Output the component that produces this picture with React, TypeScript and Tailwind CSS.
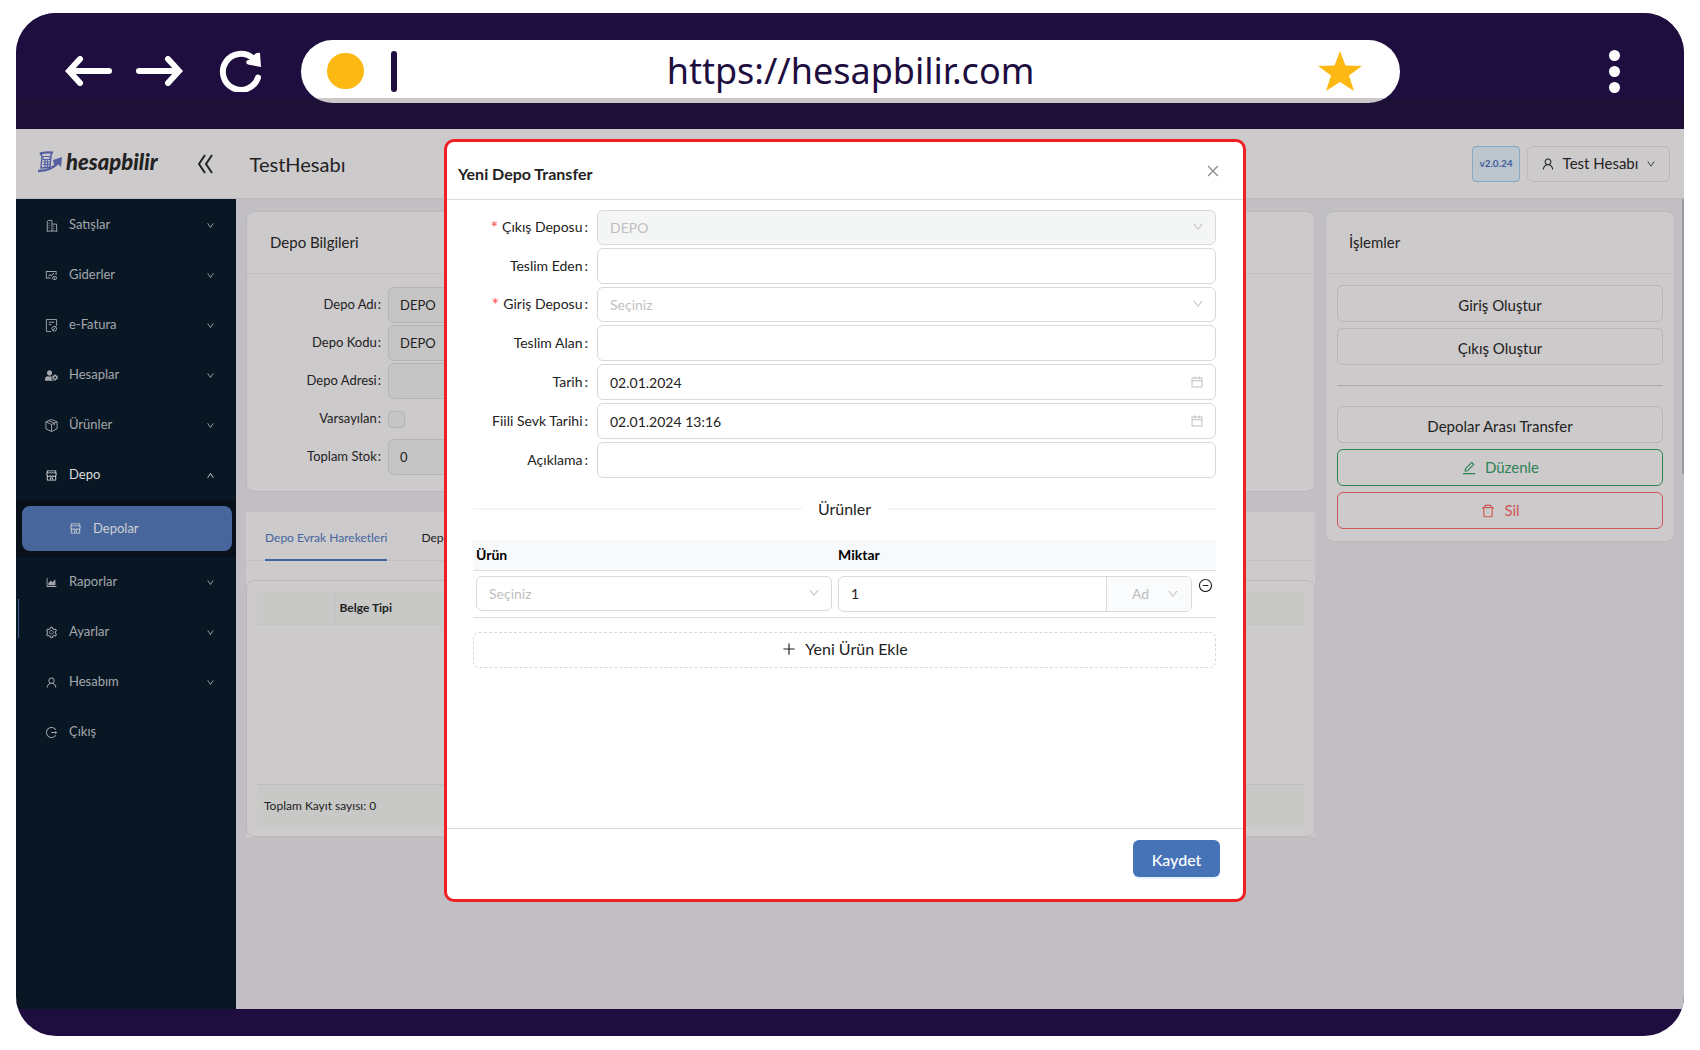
import type { ComponentType, ReactNode } from "react";
import {
  AiOutlineAreaChart,
  AiOutlineCalendar,
  AiOutlineClose,
  AiOutlineDelete,
  AiOutlineDown,
  AiOutlineEdit,
  AiOutlineFundView,
  AiOutlineLogout,
  AiOutlineMinusCircle,
  AiOutlinePlus,
  AiOutlineSetting,
  AiOutlineShop,
  AiOutlineUp,
  AiOutlineUser,
} from "react-icons/ai";
import { FaUserCog } from "react-icons/fa";

interface IconProps {
  className?: string;
}

interface MenuEntry {
  label: string;
  icon: ComponentType<IconProps>;
  expandable?: boolean;
}

function BuildingsIcon({ className }: IconProps) {
  return (
    <svg viewBox="0 0 14 14" fill="none" stroke="currentColor" className={className}>
      <path d="M2.500 13V2.500L4 1.500h3.500V13M7.500 5.500h5V13M1.500 13h12" />
      <path d="M4 4.500h2M4 7h2M4 9.500h2M9 8h2M9 10.500h2" strokeDasharray="1 1" />
    </svg>
  );
}

function InvoiceIcon({ className }: IconProps) {
  return (
    <svg viewBox="0 0 14 14" fill="none" stroke="currentColor" className={className}>
      <path d="M6.500 13.500h-5V.500h11v7M4 3.500h6M4 6h3" />
      <circle cx="10" cy="10.500" r="2.500" />
      <path d="M8.500 12l3-3" />
    </svg>
  );
}

function BoxIcon({ className }: IconProps) {
  return (
    <svg viewBox="0 0 14 14" fill="none" stroke="currentColor" strokeLinejoin="round" className={className}>
      <path d="M7 .500l6 2.500v7.500l-6 3-6-3V3zM1 3l6 3 6-3M7 6v7.500M4 1.800l6 2.700v2.500" />
    </svg>
  );
}

const MENU_TOP: MenuEntry[] = [
  { label: "Satışlar", icon: BuildingsIcon, expandable: true },
  { label: "Giderler", icon: AiOutlineFundView, expandable: true },
  { label: "e-Fatura", icon: InvoiceIcon, expandable: true },
  { label: "Hesaplar", icon: FaUserCog, expandable: true },
  { label: "Ürünler", icon: BoxIcon, expandable: true },
];

const MENU_BOTTOM: MenuEntry[] = [
  { label: "Raporlar", icon: AiOutlineAreaChart, expandable: true },
  { label: "Ayarlar", icon: AiOutlineSetting, expandable: true },
  { label: "Hesabım", icon: AiOutlineUser, expandable: true },
  { label: "Çıkış", icon: AiOutlineLogout },
];

export default function App() {
  return (
    <div className="flex min-h-screen flex-col bg-white pt-[13px] pr-4 pb-[14px] pl-4 font-['Lato','Noto_Sans',sans-serif] text-[#222]">
      <div className="flex flex-1 flex-col overflow-hidden rounded-[40px] bg-[#1e0e3f]">
        <BrowserBar />
        <div className="relative flex flex-1 flex-col bg-[#c1bfc4]">
          <TopBar />
          <div className="flex flex-1">
            <Sidebar />
            <main className="flex min-w-0 flex-1 items-start gap-[10px] pt-3 pr-[9px] pl-[10px]">
              <div className="flex min-w-0 flex-1 flex-col gap-5">
                <WarehouseCard />
                <MovementsCard />
              </div>
              <ActionsCard />
            </main>
          </div>
          <span className="absolute top-[70px] right-0 h-[275px] w-[2px] bg-[#9d9b9f]" />
          <div className="absolute inset-0 flex items-start justify-center pt-[10px] pr-[10px]">
            <TransferDialog />
          </div>
        </div>
        <div className="h-[27px]" />
      </div>
    </div>
  );
}

function BrowserBar() {
  return (
    <div className="flex h-[116px] items-center bg-[linear-gradient(#1e0e3f_85px,#1d1036_85px)]">
      <div className="flex w-[285px] items-center pl-[49px]">
        <button aria-label="Geri" className="mr-6">
          <svg width="47" height="30" viewBox="0 0 47 30" fill="none" stroke="#fff" strokeWidth="6" strokeLinecap="round">
            <path d="M44 15H6M15 3L4 15l11 12" />
          </svg>
        </button>
        <button aria-label="İleri" className="mr-9">
          <svg width="47" height="30" viewBox="0 0 47 30" fill="none" stroke="#fff" strokeWidth="6" strokeLinecap="round">
            <path d="M3 15h38M32 3l11 12-11 12" />
          </svg>
        </button>
        <button aria-label="Yenile">
          <svg width="42" height="42" viewBox="0 0 42 42" fill="none">
            <path d="M39 27.500A18 18 0 1 1 34 8.500" stroke="#fff" strokeWidth="6" strokeLinecap="round" />
            <path d="M41 3L42 17L29 14.500Q26 13 28 10.500L32 9L36 4Q39 2 41 3Z" fill="#fff" />
          </svg>
        </button>
      </div>
      <div className="flex h-[63px] flex-1 items-center rounded-full bg-[linear-gradient(#fff_58px,#cac8c9_58px)]">
        <div className="flex w-[120px] items-center gap-[27px] pl-[26px]">
          <span className="h-[36px] w-[37px] rounded-full bg-[#fdb913]" />
          <span className="h-[41px] w-[6px] rounded-full bg-[#1e0e3f]" />
        </div>
        <input
          aria-label="Adres"
          defaultValue="https://hesapbilir.com"
          className="min-w-0 flex-1 bg-transparent text-center font-['Noto_Sans',sans-serif] text-[36px] leading-[48px] text-[#1e0e3f] outline-none"
        />
        <div className="flex w-[120px] justify-end pr-[38px]">
          <svg width="44" height="40" viewBox="0 0 44 40" fill="#fdb913">
            <path d="M22 0L27.500 14.500L44 15L31 24.500L36 40L22 31L8 40L13 24.500L0 15L16.500 14.500Z" />
          </svg>
        </div>
      </div>
      <div className="flex w-[284px] justify-end pr-[64px]">
        <button aria-label="Menü" className="flex flex-col gap-[5px]">
          <span className="size-[11px] rounded-full bg-white" />
          <span className="size-[11px] rounded-full bg-white" />
          <span className="size-[11px] rounded-full bg-white" />
        </button>
      </div>
    </div>
  );
}

function TopBar() {
  return (
    <header className="flex h-[70px] items-center border-b border-[#bdbbbf] bg-[#cdcacb] pr-[14px] pl-[22px]">
      <Logo />
      <button aria-label="Menüyü daralt" className="ml-10">
        <svg width="16" height="20" viewBox="0 0 16 20" fill="none" stroke="#222" strokeWidth="2">
          <path d="M7 1L1 10l6 9M14 1L8 10l6 9" />
        </svg>
      </button>
      <h1 className="ml-9 text-[20px]">TestHesabı</h1>
      <div className="ml-auto flex gap-[7px]">
        <span className="flex h-[36px] w-12 items-center justify-center rounded border border-[#86aac4] bg-[#bcc5cb] text-[10px] font-bold text-[#3d5c9c]">
          v2.0.24
        </span>
        <button className="flex h-[36px] w-[143px] items-center justify-center gap-2 rounded-md border border-[#b9b7b8] text-[15px]">
          <AiOutlineUser className="size-[14px]" />
          Test Hesabı
          <AiOutlineDown className="size-[10px]" />
        </button>
      </div>
    </header>
  );
}

function Logo() {
  return (
    <a href="#" className="flex items-center gap-1 pb-1">
      <svg width="24" height="22" viewBox="0 0 24 22" fill="none" stroke="#5460a3">
        <path d="M2 2.500Q8 1 14 1.500L13 4" strokeWidth="2" />
        <path d="M2 2l2 3-1 12 9-1 1-12" strokeWidth="1.500" />
        <path d="M5 5.500h7v3H5z" strokeWidth="1" />
        <path d="M5 11h7M5 13.500h7M7 9v7M9.500 9v7" strokeWidth="1.200" />
        <path d="M0 20q13 0 21-9" strokeWidth="2.500" />
        <path d="M15 9l9-3-1 10-3-3-4 1z" fill="#5460a3" stroke="none" />
      </svg>
      <span className="font-['Lato',sans-serif] text-[22px] leading-7 font-black italic">hesapbilir</span>
    </a>
  );
}

function MenuItem({ label, icon: Icon, expandable }: MenuEntry) {
  return (
    <li>
      <button className="flex h-[50px] w-full items-center pr-[21px] pl-[29px] text-left">
        <Icon className="size-[13px]" />
        <span className="ml-[11px] flex-1">{label}</span>
        {expandable && <AiOutlineDown className="size-[9px]" />}
      </button>
    </li>
  );
}

function Sidebar() {
  return (
    <nav className="relative w-[220px] shrink-0 bg-[#091725] text-[13px] text-[#a4a8ac]">
      <ul className="pt-px">
        {MENU_TOP.map((item) => (
          <MenuItem key={item.label} {...item} />
        ))}
        <li>
          <button className="flex h-[50px] w-full items-center pr-[21px] pl-[29px] text-left text-[#dcdddd]">
            <AiOutlineShop className="size-[13px]" />
            <span className="ml-[11px] flex-1">Depo</span>
            <AiOutlineUp className="size-[9px]" />
          </button>
          <div className="bg-[#08101a] pt-[6px] pr-1 pb-[6px] pl-[6px]">
            <a href="#" className="flex h-[45px] items-center gap-[11px] rounded-lg bg-[#46669c] pl-[47px] text-[#cfd1d2]">
              <AiOutlineShop className="size-[13px]" />
              Depolar
            </a>
          </div>
        </li>
        {MENU_BOTTOM.map((item) => (
          <MenuItem key={item.label} {...item} />
        ))}
      </ul>
      <span className="absolute top-[400px] left-[2px] h-[39px] w-px bg-[#3c5c94]" />
    </nav>
  );
}

function Card({ title, className = "", children }: { title: string; className?: string; children: ReactNode }) {
  return (
    <section className={`rounded-lg border border-[#bab8ba] bg-[#cdcacb] ${className}`}>
      <h2 className="border-b border-[#c2c0c2] px-[23px] py-5 text-[15px] leading-[21px]">{title}</h2>
      {children}
    </section>
  );
}

function WarehouseCard() {
  const rows = [
    { id: "depo-adi", label: "Depo Adı", value: "DEPO" },
    { id: "depo-kodu", label: "Depo Kodu", value: "DEPO" },
    { id: "depo-adresi", label: "Depo Adresi", value: "" },
    { id: "varsayilan", label: "Varsayılan" },
    { id: "toplam-stok", label: "Toplam Stok", value: "0" },
  ];
  return (
    <Card title="Depo Bilgileri">
      <div className="flex w-1/2 flex-col gap-[2px] pt-[13px] pb-4 text-[13px]">
        {rows.map((row) => (
          <div key={row.id} className="grid h-[36px] grid-cols-[134px_1fr] items-center gap-[7px]">
            <label htmlFor={row.id} className="text-right">
              {row.label}
              <span className="ml-px">:</span>
            </label>
            {row.value === undefined ? (
              <input
                id={row.id}
                type="checkbox"
                disabled
                className="size-[17px] appearance-none rounded border border-[#b5b3b4] bg-[#c6c5c5]"
              />
            ) : (
              <input
                id={row.id}
                disabled
                defaultValue={row.value}
                className="h-full min-w-0 rounded-md border border-[#b5b3b4] bg-[#c6c5c5] px-[11px]"
              />
            )}
          </div>
        ))}
      </div>
    </Card>
  );
}

function MovementsCard() {
  return (
    <section className="bg-[#cdcacb]">
      <div role="tablist" className="mb-[19px] flex gap-[34px] border-b border-[#c2c0c2] px-[19px] text-[12px]">
        <button role="tab" aria-selected className="-mb-px h-[49px] border-b-2 border-[#4464a0] pt-1 text-[#4464a0]">
          Depo Evrak Hareketleri
        </button>
        <button role="tab" aria-selected={false} className="h-[47px] pt-1">
          Depo Stokları
        </button>
      </div>
      <div className="rounded-lg border border-[#b9b7b9] px-[10px] pt-[11px] pb-[10px]">
        <table className="w-full text-[12px]">
          <thead>
            <tr className="h-8 border-b border-[#c5c4c4] bg-[#c8c8c7]">
              <th className="w-[78px] border-r border-[#c5c4c4]" />
              <th className="px-1 text-left">Belge Tipi</th>
            </tr>
          </thead>
        </table>
        <p className="mt-[159px] border-t border-[#bfbebe] bg-[#c8c8c7] px-[7px] py-[10px] text-[12px] leading-[21px]">
          Toplam Kayıt sayısı: 0
        </p>
      </div>
    </section>
  );
}

const ACTION_BUTTON = "flex h-[37px] w-full items-center justify-center gap-2 rounded-md border text-[15px]";

function ActionsCard() {
  return (
    <Card title="İşlemler" className="w-[350px] shrink-0">
      <div className="flex flex-col gap-[6px] px-[11px] pt-[11px] pb-3">
        <button className={`${ACTION_BUTTON} border-[#b7b5b6] pt-[3px]`}>Giriş Oluştur</button>
        <button className={`${ACTION_BUTTON} border-[#b7b5b6] pt-[3px]`}>Çıkış Oluştur</button>
        <hr className="my-[14px] border-[#aaa8a9]" />
        <button className={`${ACTION_BUTTON} border-[#b7b5b6] pt-[3px]`}>Depolar Arası Transfer</button>
        <button className={`${ACTION_BUTTON} border-[#2d8455] text-[#2d8455]`}>
          <AiOutlineEdit className="size-4" />
          Düzenle
        </button>
        <button className={`${ACTION_BUTTON} border-[#cf5654] text-[#cf5654]`}>
          <AiOutlineDelete className="size-4" />
          Sil
        </button>
      </div>
    </Card>
  );
}

interface Field {
  id: string;
  label: string;
  kind: "select" | "text" | "date";
  value?: string;
  required?: boolean;
  disabled?: boolean;
}

const FIELDS: Field[] = [
  { id: "cikis", label: "Çıkış Deposu", kind: "select", value: "DEPO", required: true, disabled: true },
  { id: "eden", label: "Teslim Eden", kind: "text" },
  { id: "giris", label: "Giriş Deposu", kind: "select", value: "Seçiniz", required: true },
  { id: "alan", label: "Teslim Alan", kind: "text" },
  { id: "tarih", label: "Tarih", kind: "date", value: "02.01.2024" },
  { id: "sevk", label: "Fiili Sevk Tarihi", kind: "date", value: "02.01.2024 13:16" },
  { id: "aciklama", label: "Açıklama", kind: "text" },
];

function Select({ id, value, disabled, label }: { id?: string; value?: string; disabled?: boolean; label?: string }) {
  return (
    <div className="relative">
      <select
        id={id}
        aria-label={label}
        disabled={disabled}
        className="block h-[35px] w-full appearance-none rounded-md border border-[#d9d9d9] bg-white px-3 text-[#bfbfbf] opacity-100 disabled:bg-[#f4f5f5]"
      >
        <option>{value}</option>
      </select>
      <AiOutlineDown className="pointer-events-none absolute top-[11px] right-3 size-[12px] text-[#bfbfbf]" />
    </div>
  );
}

function FormRow({ id, label, kind, value, required, disabled }: Field) {
  return (
    <div className="grid grid-cols-[115px_1fr] items-center gap-[9px]">
      <label htmlFor={id} className="flex items-center justify-end pb-[2px]">
        {required && <span className="mr-1 text-[18px] leading-4 text-[#ff4d4f]">*</span>}
        {label}
        <span className="ml-[2px]">:</span>
      </label>
      {kind === "select" ? (
        <Select id={id} value={value} disabled={disabled} />
      ) : (
        <div className="relative">
          <input
            id={id}
            defaultValue={value}
            className="block h-[36px] w-full rounded-md border border-[#d9d9d9] px-3"
          />
          {kind === "date" && (
            <AiOutlineCalendar className="pointer-events-none absolute top-[11px] right-3 size-[14px] text-[#bfbfbf]" />
          )}
        </div>
      )}
    </div>
  );
}

function TransferDialog() {
  return (
    <div
      role="dialog"
      aria-labelledby="transfer-title"
      className="flex min-h-[763px] w-[802px] max-w-full flex-col rounded-[10px] border-[3px] border-[#ee2024] bg-white text-[14px]"
    >
      <div className="flex h-[58px] items-center justify-between border-b border-[#dcdcdc] pr-[22px] pl-[11px]">
        <h2 id="transfer-title" className="pt-[7px] text-[16px] font-bold">
          Yeni Depo Transfer
        </h2>
        <button aria-label="Kapat">
          <AiOutlineClose className="size-4 text-[#8c8c8c]" />
        </button>
      </div>
      <form className="flex flex-1 flex-col pt-[10px] pr-[27px] pl-[26px]">
        <div className="flex flex-col gap-[3px]">
          {FIELDS.map((field) => (
            <FormRow key={field.id} {...field} />
          ))}
        </div>
        <div className="mt-[19px] flex items-center gap-4 text-[16px] leading-6">
          <span className="h-[2px] flex-1 bg-[#f5f5f5]" />
          Ürünler
          <span className="h-[2px] flex-1 bg-[#f5f5f5]" />
        </div>
        <table className="mt-[19px] w-full">
          <thead>
            <tr className="h-[30px] border-b border-[#dcdfe1] bg-[#f8f9fb] text-left text-black">
              <th className="w-[362px] px-[3px]">Ürün</th>
              <th className="px-[3px]">Miktar</th>
              <th className="w-[21px]" />
            </tr>
          </thead>
          <tbody>
            <tr className="h-[47px] border-b border-[#dcdcdc]">
              <td className="px-[3px]">
                <Select value="Seçiniz" label="Ürün" />
              </td>
              <td className="px-[3px]">
                <div className="flex h-[36px] overflow-hidden rounded-md border border-[#d9d9d9]">
                  <input aria-label="Miktar" defaultValue="1" className="min-w-0 flex-1 px-3" />
                  <div className="relative w-[85px] border-l border-[#d9d9d9] bg-[#fafbfc]">
                    <select aria-label="Birim" disabled className="h-full w-full appearance-none pl-[25px] text-[#bfbfbf] opacity-100">
                      <option>Ad</option>
                    </select>
                    <AiOutlineDown className="pointer-events-none absolute top-[11px] right-3 size-[12px] text-[#bfbfbf]" />
                  </div>
                </div>
              </td>
              <td className="pt-[7px] pl-[3px] align-top">
                <button type="button" aria-label="Satırı sil" className="block">
                  <AiOutlineMinusCircle className="size-[15px]" />
                </button>
              </td>
            </tr>
          </tbody>
        </table>
        <button
          type="button"
          className="mt-[14px] flex h-[36px] items-center justify-center gap-2 rounded-md border border-dashed border-[#d9d9d9] pb-[2px] text-[16px]"
        >
          <AiOutlinePlus className="size-4" />
          Yeni Ürün Ekle
        </button>
      </form>
      <div className="flex h-[71px] justify-end border-t border-[#dcdcdc] pt-[11px] pr-[23px]">
        <button className="h-[37px] w-[87px] rounded-md bg-[#4672b8] pt-[2px] text-[16px] font-medium text-white shadow-[0_2px_0_#e6f4ff]">
          Kaydet
        </button>
      </div>
    </div>
  );
}
